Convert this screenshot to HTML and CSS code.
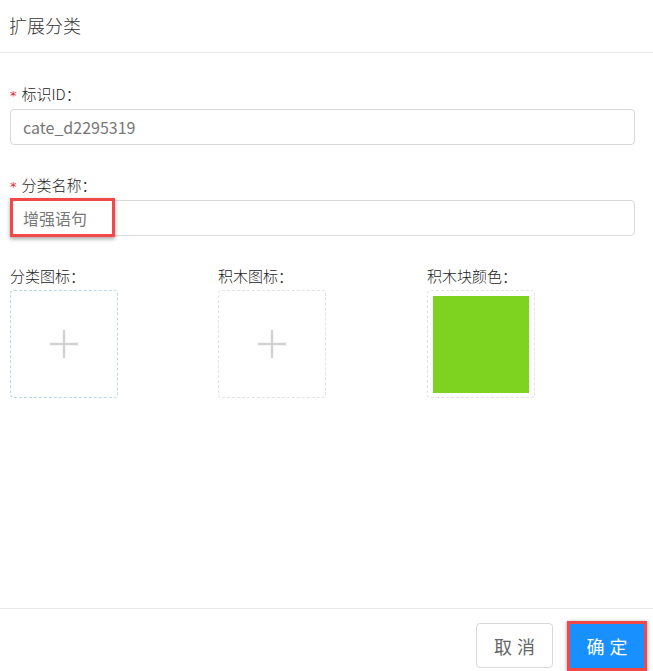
FILE: index.html
```html
<!DOCTYPE html>
<html lang="zh">
<head>
<meta charset="utf-8">
<title>扩展分类</title>
<link rel="stylesheet" href="styles.css">
</head>
<body>
<div class="dialog">
  <header class="dialog-header">扩展分类</header>
  <main class="dialog-body">
    <div class="field">
      <label class="field-label"><span class="req">*</span>标识ID：</label>
      <div class="input">cate_d2295319</div>
    </div>
    <div class="field">
      <label class="field-label"><span class="req">*</span>分类名称：</label>
      <div class="input-wrap">
        <div class="input">增强语句</div>
        <div class="highlight"></div>
      </div>
    </div>
    <div class="uploads">
      <div class="upload-col">
        <div class="field-label">分类图标：</div>
        <div class="upload-box active">
          <svg class="plus" width="30" height="30" viewBox="0 0 30 30"><path d="M15 1v28M1 15h28" stroke="#d2d2d2" stroke-width="2.4" fill="none"/></svg>
        </div>
      </div>
      <div class="upload-col">
        <div class="field-label">积木图标：</div>
        <div class="upload-box">
          <svg class="plus" width="30" height="30" viewBox="0 0 30 30"><path d="M15 1v28M1 15h28" stroke="#d2d2d2" stroke-width="2.4" fill="none"/></svg>
        </div>
      </div>
      <div class="upload-col">
        <div class="field-label">积木块颜色：</div>
        <div class="upload-box color-box">
          <div class="swatch"></div>
        </div>
      </div>
    </div>
  </main>
  <footer class="dialog-footer">
    <button class="btn btn-cancel">取消</button>
    <div class="btn-mark">
      <button class="btn btn-ok">确定</button>
    </div>
  </footer>
</div>
</body>
</html>
```
FILE: styles.css
```css
* { box-sizing: border-box; }
html, body { margin: 0; padding: 0; background: #fff; }
body {
  font-family: "Noto Sans CJK SC", "Open Sans", sans-serif;
  color: #333;
}
.dialog {
  width: 653px;
  height: 671px;
  display: flex;
  flex-direction: column;
}
.dialog-header {
  height: 53px;
  border-bottom: 1px solid #e8e8e8;
  padding: 13px 0 0 9px;
  font-size: 18px;
  font-weight: 300;
  line-height: 24px;
  color: #333;
}
.dialog-body {
  flex: 1;
  padding: 31px 18px 0 10px;
}
.field { margin-bottom: 30px; }
.field-label {
  display: block;
  height: 20px;
  font-size: 15px;
  font-weight: 300;
  line-height: 20px;
  color: #222;
  margin-bottom: 5px;
}
.req {
  color: #f5222d;
  margin-right: 5px;
  font-family: "DejaVu Sans", sans-serif;
  font-size: 13px;
  font-weight: 400;
  line-height: 1;
}
.input {
  height: 36px;
  border: 1px solid #d9d9d9;
  border-radius: 4px;
  padding-left: 12px;
  font-size: 16px;
  font-weight: 400;
  line-height: 34px;
  color: #777;
}
.input-wrap { position: relative; }
.highlight {
  position: absolute;
  left: 0;
  top: -2px;
  width: 105px;
  height: 39px;
  border: 3px solid #f24848;
  box-shadow: 0 2px 4px rgba(0, 0, 0, 0.35);
}
.uploads {
  display: grid;
  grid-template-columns: 208px 209px 1fr;
  margin-top: 2px;
}
.uploads .field-label { margin-bottom: 4px; }
.upload-box {
  width: 108px;
  height: 108px;
  border: 1px dashed #e2e2e2;
  border-radius: 4px;
  display: flex;
  align-items: center;
  justify-content: center;
}
.upload-box.active { border-color: #bcd8ee; }
.color-box { padding: 5px; }
.swatch {
  width: 97px;
  height: 97px;
  background: #7ed321;
}
.dialog-footer {
  height: 63px;
  border-top: 1px solid #e8e8e8;
  display: flex;
  justify-content: flex-end;
  align-items: flex-start;
  padding: 12px 6px 0 0;
  gap: 14px;
}
.btn {
  font-family: "Noto Sans CJK SC", sans-serif;
  font-size: 18px;
  font-weight: 400;
  letter-spacing: 5px;
  border-radius: 4px;
  cursor: pointer;
}
.btn-cancel {
  margin-top: 2px;
  width: 77px;
  height: 45px;
  background: #fff;
  border: 1px solid #d9d9d9;
  color: #666;
  padding: 0 0 0 5px;
}
.btn-mark {
  border: 3px solid #f24848;
  box-shadow: 0 1px 4px rgba(0, 0, 0, 0.4);
}
.btn-ok {
  display: block;
  width: 74px;
  height: 44px;
  background: #1890ff;
  border: none;
  border-radius: 0;
  color: #fff;
  padding: 0 0 0 5px;
}
```
